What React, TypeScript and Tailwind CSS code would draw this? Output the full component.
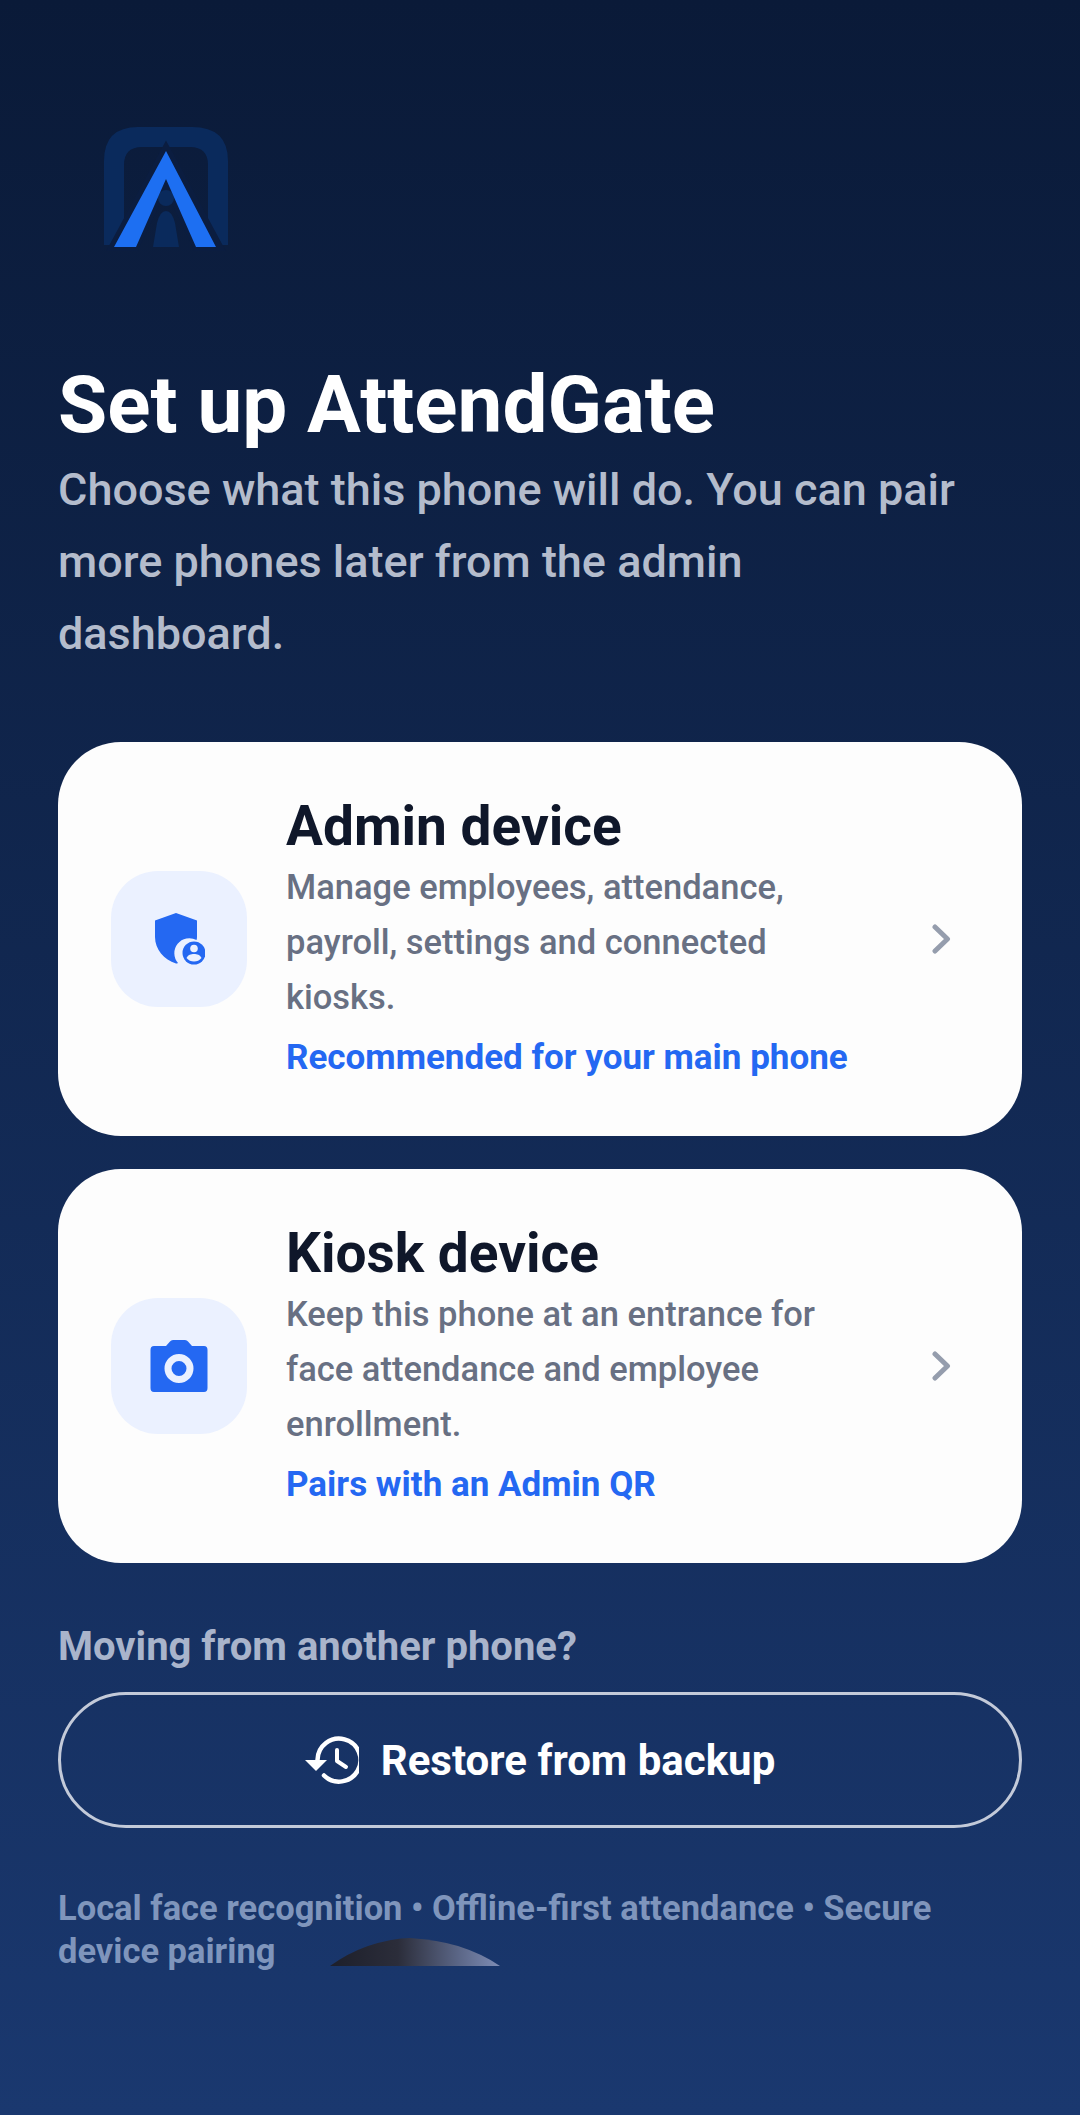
import React from "react";

function Logo() {
  return (
    <svg width="124" height="124" viewBox="0 0 124 124" className="block">
      <path d="M0 118V34Q0 0 34 0H88Q124 0 124 34V118H104V38Q104 20 86 20H38Q20 20 20 38V118Z" fill="#0A2A5C" />
      <path d="M62 24L114 120H94L62 52L30 120H10Z" fill="#0B1D40" stroke="#0B1D40" strokeWidth="10" />
      <circle cx="62" cy="71" r="8" fill="#0A2A5C" />
      <path d="M49 120L53 96Q56 84 62 84Q68 84 71 96L75 120Z" fill="#0A2A5C" />
      <path d="M62 24L112 120H92L62 52L32 120H10Z" fill="#1D6FF2" />
    </svg>
  );
}

function ShieldIcon() {
  return (
    <svg width="52" height="52" viewBox="0 0 52 52" className="block">
      <path d="M23 0L44 7.5V24Q44 26 43.5 27A15 15 0 0 0 25 50Q24 50.500 23 50.500C11 47 2 36 2 24V7.500Z" fill="#2468F2" />
      <circle cx="41" cy="40" r="11.500" fill="#2468F2" />
      <circle cx="41" cy="35.500" r="3.800" fill="#EBF1FF" />
      <path d="M33.500 45C35 41.800 38 41 41 41C44 41 47 41.800 48.500 45C46.500 47.500 44 48.500 41 48.500C38 48.500 35.500 47.500 33.500 45Z" fill="#EBF1FF" />
    </svg>
  );
}

function CameraIcon() {
  return (
    <svg width="58" height="52" viewBox="0 0 58 52" className="block">
      <path fillRule="evenodd" d="M4 6H16L20 1.500Q21 0 23 0H35Q37 0 38 1.500L42 6H54Q57.500 6 57.500 10V48Q57.500 52 54 52H4Q0.500 52 0.500 48V10Q0.500 6 4 6ZM29 14A14.500 14.500 0 1 0 29 43A14.500 14.500 0 1 0 29 14ZM29 21A7.500 7.500 0 1 1 29 36A7.500 7.500 0 1 1 29 21Z" fill="#2468F2" />
    </svg>
  );
}

function Chevron() {
  return (
    <svg width="20" height="30" viewBox="0 0 20 30" className="block">
      <path d="M3 3L15.500 15L3 27" fill="none" stroke="#959DAD" strokeWidth="5" strokeLinecap="round" strokeLinejoin="round" />
    </svg>
  );
}

function HistoryIcon() {
  return (
    <svg width="54" height="48" viewBox="0 0 54 48" className="block">
      <path d="M12.500 24A21.500 21.500 0 1 1 19 39.500" fill="none" stroke="#fff" strokeWidth="4.500" strokeLinecap="round" />
      <path d="M0 24H22L11 35Z" fill="#fff" />
      <path d="M32 14V25L41 31" fill="none" stroke="#fff" strokeWidth="4" strokeLinecap="round" strokeLinejoin="round" />
    </svg>
  );
}

function Card({ icon, title, lines, note }: { icon: React.ReactNode; title: string; lines: string[]; note: string }) {
  return (
    <div className="flex h-[394px] items-center rounded-[63px] bg-[#FDFDFD] pl-[53px] pr-[70px]">
      <div className="flex h-[136px] w-[136px] shrink-0 items-center justify-center rounded-[47px] bg-[#EBF1FF]">{icon}</div>
      <div className="ml-[39px] flex-1">
        <div className="text-[55px] leading-[66px] font-bold text-[#0F172A]">{title}</div>
        <div className="mt-[1px] text-[34.500px] leading-[55px] font-medium text-[#687083]">
          {lines.map((l) => (
            <div key={l}>{l}</div>
          ))}
        </div>
        <div className="mt-[5px] text-[35px] leading-[55px] font-bold text-[#2468F2]">{note}</div>
      </div>
      <Chevron />
    </div>
  );
}

export default function App() {
  return (
    <div className="relative h-[2115px] w-[1080px] overflow-hidden bg-gradient-to-b from-[#0A1A38] to-[#1A386F] font-['Roboto',sans-serif]">
      <div className="flex h-full flex-col px-[58px] pt-[127px]">
        <div className="ml-[46px]">
          <Logo />
        </div>
        <h1 className="mt-[106px] text-[80px] leading-[96px] font-bold text-white">Set up AttendGate</h1>
        <div className="mt-[1px] text-[45px] leading-[72px] font-medium text-[#B4BCCC]">
          <div>Choose what this phone will do. You can pair</div>
          <div>more phones later from the admin</div>
          <div>dashboard.</div>
        </div>
        <div className="mt-[72px] flex flex-col gap-[33px]">
          <Card
            icon={<ShieldIcon />}
            title="Admin device"
            lines={["Manage employees, attendance,", "payroll, settings and connected", "kiosks."]}
            note="Recommended for your main phone"
          />
          <Card
            icon={<CameraIcon />}
            title="Kiosk device"
            lines={["Keep this phone at an entrance for", "face attendance and employee", "enrollment."]}
            note="Pairs with an Admin QR"
          />
        </div>
        <div className="mt-[60px] text-[40px] leading-[48px] font-bold text-[#A9B4CB]">Moving from another phone?</div>
        <div className="mt-[21px] flex h-[136px] items-center justify-center gap-[22px] rounded-full border-[3px] border-[#C3CAD9]">
          <HistoryIcon />
          <span className="text-[42px] font-bold text-white">Restore from backup</span>
        </div>
        <div className="mt-[59px] text-[34.500px] leading-[43px] font-bold text-[#7F95BC]">
          <div>Local face recognition • Offline-first attendance • Secure</div>
          <div>device pairing</div>
        </div>
      </div>
      <svg width="180" height="30" viewBox="0 0 180 30" className="absolute left-[328px] top-[1937px]">
        <defs>
          <linearGradient id="b" x1="0" x2="1" y1="0" y2="0">
            <stop offset="0" stopColor="#1D1F2A" />
            <stop offset="0.4" stopColor="#2B2D3A" />
            <stop offset="0.75" stopColor="#5A6585" />
            <stop offset="1" stopColor="#7F8DB5" />
          </linearGradient>
        </defs>
        <path d="M2 29Q20 16 40 9Q65 1 82 1Q110 3 130 9Q155 17 172 29Z" fill="url(#b)" />
      </svg>
    </div>
  );
}
